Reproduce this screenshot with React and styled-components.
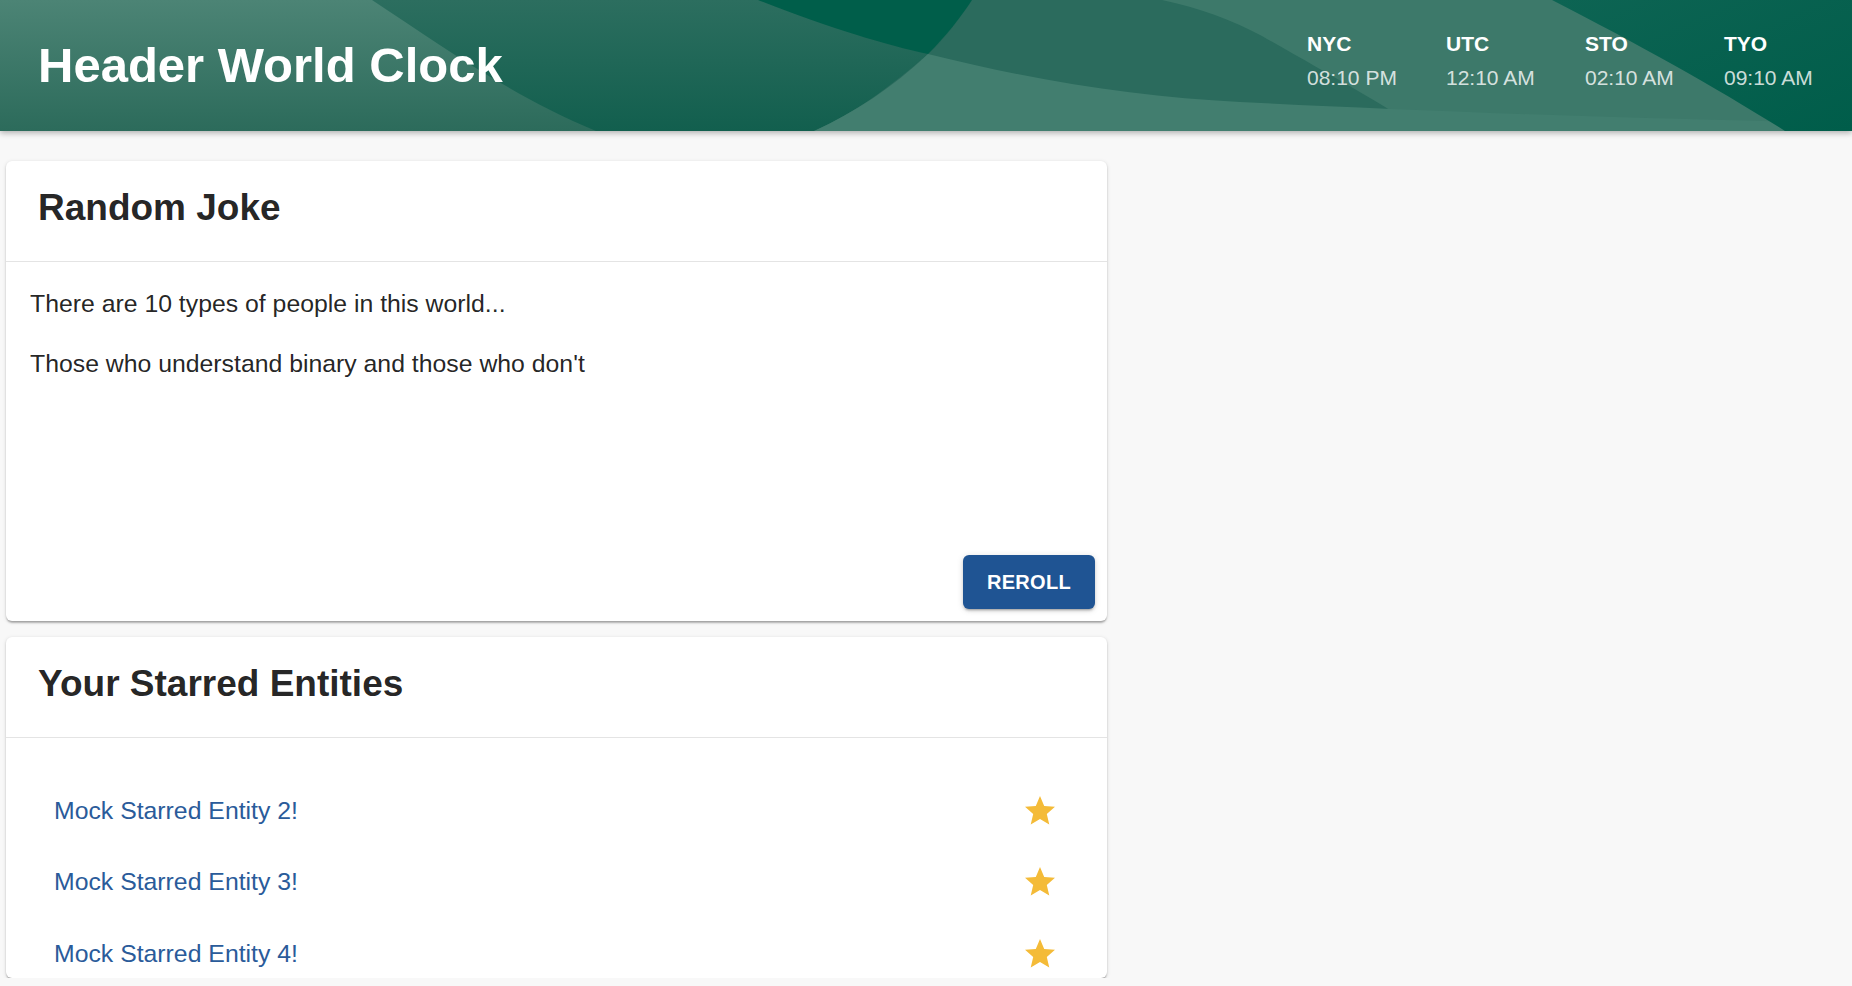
import React from "react";
import styled, { createGlobalStyle } from "styled-components";

const GlobalStyle = createGlobalStyle`
  html, body {
    margin: 0;
    padding: 0;
    background: #f8f8f8;
    font-family: "Liberation Sans", Arial, Helvetica, sans-serif;
  }
`;

const clocks = [
  { label: "NYC", time: "08:10 PM" },
  { label: "UTC", time: "12:10 AM" },
  { label: "STO", time: "02:10 AM" },
  { label: "TYO", time: "09:10 AM" },
];

const starred = [
  "Mock Starred Entity 2!",
  "Mock Starred Entity 3!",
  "Mock Starred Entity 4!",
];

const HeaderWaves = () => (
  <Waves viewBox="0 0 1852 131" preserveAspectRatio="none">
    <defs>
      <linearGradient id="base" x1="0" y1="0" x2="0" y2="1">
        <stop offset="0" stopColor="#2c6e5f" />
        <stop offset="1" stopColor="#125f4e" />
      </linearGradient>
      <linearGradient id="left" x1="0" y1="0" x2="0" y2="1">
        <stop offset="0" stopColor="#4c8475" />
        <stop offset="1" stopColor="#2c6b5b" />
      </linearGradient>
      <linearGradient id="corner" x1="0" y1="0" x2="1" y2="1">
        <stop offset="0" stopColor="#0d6453" />
        <stop offset="1" stopColor="#005d4a" />
      </linearGradient>
    </defs>
    <rect x="0" y="0" width="1852" height="131" fill="url(#base)" />
    <path d="M0 0 H372 C440 45 510 95 596 131 H0 Z" fill="url(#left)" />
    <path d="M972 0 C955 25 942 42 928 54 C880 95 850 115 814 131 H1852 V0 Z" fill="#2b6b5d" />
    <path d="M1162 0 C1200 8 1232 20 1262 36 C1330 75 1385 105 1422 131 H1852 V0 Z" fill="#3d796a" />
    <path d="M928 54 C1040 82 1140 97 1240 102 C1400 110 1600 118 1852 123 V131 H814 C855 112 892 88 928 54 Z" fill="#427e6f" />
    <path d="M1552 0 C1640 45 1720 90 1785 131 H1852 V0 Z" fill="url(#corner)" />
    <path d="M758 0 C830 28 885 45 928 54 C946 36 961 17 972 0 Z" fill="#005e4a" />
  </Waves>
);

const StarIcon = () => (
  <StarSvg viewBox="0 0 24 24">
    <path d="M12 17.27L18.18 21l-1.64-7.03L22 9.24l-7.19-.61L12 2 9.19 8.63 2 9.24l5.46 4.73L5.82 21z" />
  </StarSvg>
);

const App = () => {
  return (
    <>
      <GlobalStyle />
      <Header>
        <HeaderWaves />
        <Title>Header World Clock</Title>
        <ClockList>
          {clocks.map((c) => (
            <Clock key={c.label}>
              <ClockLabel>{c.label}</ClockLabel>
              <ClockTime>{c.time}</ClockTime>
            </Clock>
          ))}
        </ClockList>
      </Header>
      <Content>
        <Card $height={460}>
          <CardHeader>
            <CardTitle>Random Joke</CardTitle>
          </CardHeader>
          <JokeBody>
            <p>There are 10 types of people in this world...</p>
            <p>Those who understand binary and those who don't</p>
          </JokeBody>
          <CardActions>
            <Button>Reroll</Button>
          </CardActions>
        </Card>
        <Card $height={341}>
          <CardHeader>
            <CardTitle>Your Starred Entities</CardTitle>
          </CardHeader>
          <ListBody>
            {starred.map((name) => (
              <ListItem key={name}>
                <EntityLink href="#">{name}</EntityLink>
                <StarIcon />
              </ListItem>
            ))}
          </ListBody>
        </Card>
      </Content>
    </>
  );
};

const Header = styled.header`
  position: relative;
  height: 131px;
  display: flex;
  align-items: center;
  justify-content: space-between;
  padding: 0 38px;
  box-sizing: border-box;
  overflow: hidden;
  box-shadow: 0 2px 6px rgba(0, 0, 0, 0.3);
  color: #fff;
  z-index: 1;
`;

const Waves = styled.svg`
  position: absolute;
  inset: 0;
  width: 100%;
  height: 100%;
  z-index: -1;
`;

const Title = styled.h1`
  margin: 0;
  font-size: 49px;
  font-weight: 700;
  line-height: 1.2;
`;

const ClockList = styled.div`
  display: flex;
  gap: 49px;
  margin-bottom: 9px;
`;

const Clock = styled.div`
  display: flex;
  flex-direction: column;
  min-width: 90px;
`;

const ClockLabel = styled.span`
  font-size: 21px;
  font-weight: 700;
  line-height: 34px;
`;

const ClockTime = styled.span`
  font-size: 21px;
  line-height: 34px;
  color: rgba(255, 255, 255, 0.8);
`;

const Content = styled.main`
  display: flex;
  flex-direction: column;
  gap: 16px;
  padding: 30px 6px 0;
`;

const Card = styled.section`
  width: 1101px;
  height: ${(p) => p.$height}px;
  display: flex;
  flex-direction: column;
  background: #fff;
  border-radius: 6px;
  overflow: hidden;
  box-shadow: 0 3px 2px -1px rgba(0, 0, 0, 0.2), 0 1px 2px 0 rgba(0, 0, 0, 0.14),
    0 1px 4px 0 rgba(0, 0, 0, 0.12);
`;

const CardHeader = styled.div`
  height: 101px;
  flex: none;
  display: flex;
  align-items: center;
  padding: 0 32px 6px;
  box-sizing: border-box;
  border-bottom: 1px solid #e4e4e4;
`;

const CardTitle = styled.h2`
  margin: 0;
  font-size: 37px;
  font-weight: 700;
  color: rgba(0, 0, 0, 0.87);
`;

const JokeBody = styled.div`
  flex: 1;
  padding: 24px 24px;
  font-size: 24.8px;
  line-height: 36px;
  color: rgba(0, 0, 0, 0.87);

  p {
    margin: 0 0 24px;
  }
`;

const CardActions = styled.div`
  display: flex;
  justify-content: flex-end;
  padding: 12px;
`;

const Button = styled.button`
  height: 54px;
  padding: 0 24px;
  border: none;
  border-radius: 6px;
  background: #1f5493;
  color: #fff;
  font-family: inherit;
  font-size: 20px;
  font-weight: 700;
  text-transform: uppercase;
  letter-spacing: 0.3px;
  box-shadow: 0 3px 2px -2px rgba(0, 0, 0, 0.2), 0 2px 3px 0 rgba(0, 0, 0, 0.14),
    0 1px 7px 0 rgba(0, 0, 0, 0.12);
  cursor: pointer;
`;

const ListBody = styled.ul`
  flex: 1;
  list-style: none;
  margin: 0;
  padding: 37px 24px 0;
`;

const ListItem = styled.li`
  height: 71.5px;
  display: flex;
  align-items: center;
  justify-content: space-between;
  padding: 0 25px 0 24px;
`;

const EntityLink = styled.a`
  font-size: 24.8px;
  color: #2a5b9a;
  text-decoration: none;
`;

const StarSvg = styled.svg`
  width: 36px;
  height: 36px;
  fill: #f4bb38;
`;

export default App;
